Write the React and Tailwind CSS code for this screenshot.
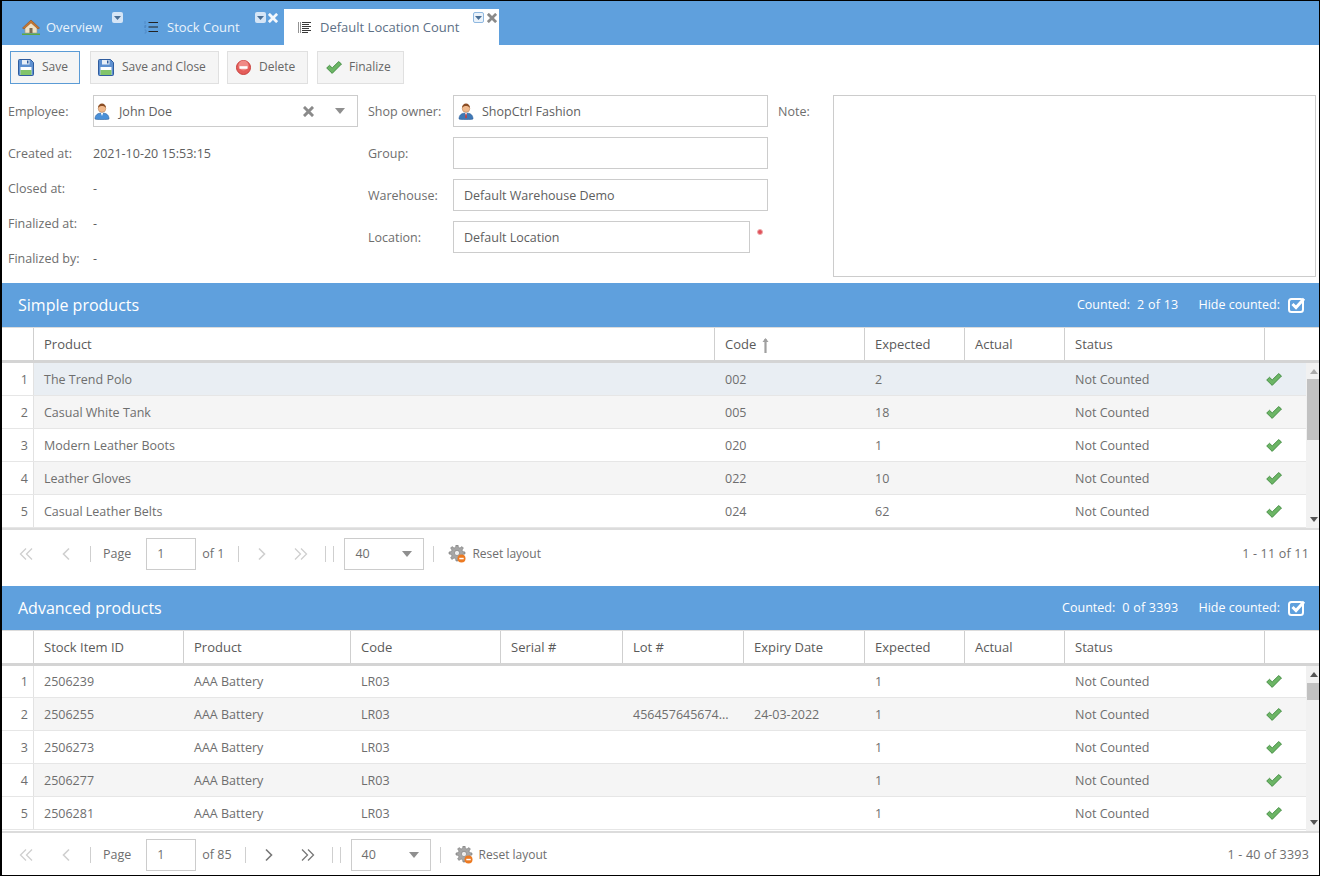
import React from "react";

const Home = () => (
  <svg width="20" height="18" viewBox="0 0 20 18" className="shrink-0">
    <path d="M4 9v6h12V9L10 4z" fill="#efe3c8" stroke="#a89a78" strokeWidth=".6" />
    <path d="M1.500 10 10 2l8.500 8-1.500 1L10 4.800 3 11z" fill="#c9772f" stroke="#8f5220" strokeWidth=".6" />
    <rect x="8.500" y="10" width="3" height="5" fill="#7d6a50" />
    <path d="M1 15.500h18V17H1z" fill="#5fa83f" />
  </svg>
);
const StockList = () => (
  <svg width="14" height="14" viewBox="0 0 14 14" className="shrink-0">
    <path d="M4.500 2.500H14M4.500 7H14M4.500 11.500H14" stroke="#222" strokeWidth="1" />
    <path d="M1 1v3M.5 5.500h1.500v1H.5v1H2M.5 10H2v3H.5" stroke="#4d86c4" strokeWidth=".8" fill="none" />
  </svg>
);
const DetailList = () => (
  <svg width="13" height="13" viewBox="0 0 13 13" className="shrink-0">
    <path d="M.5 1v11M2.500 1v11" stroke="#777" strokeWidth=".8" />
    <path d="M4 1.500h9M4 3.500h7M4 5.500h9M4 7.500h7M4 9.500h9M4 11.500h6" stroke="#222" strokeWidth=".9" />
  </svg>
);
const Floppy = () => (
  <svg width="16" height="17" viewBox="0 0 16 17" className="shrink-0">
    <path d="M.5 1.500a1 1 0 0 1 1-1h11l3 3v12a1 1 0 0 1-1 1h-13a1 1 0 0 1-1-1z" fill="#5d8fd0" stroke="#2f5c9e" />
    <rect x="4" y="1" width="7.500" height="4.500" fill="#e8eef6" />
    <rect x="9" y="1.500" width="1.500" height="3" fill="#2f5c9e" />
    <rect x="2.500" y="8" width="11" height="8" fill="#fff" />
    <rect x="2.500" y="11" width="11" height="5" fill="#82c46a" />
  </svg>
);
const Minus = () => (
  <svg width="15" height="15" viewBox="0 0 15 15" className="shrink-0">
    <circle cx="7.500" cy="7.500" r="7" fill="#e45d5a" stroke="#c8403d" />
    <circle cx="7.500" cy="5.500" r="5" fill="#f08a86" />
    <rect x="3.500" y="6.200" width="8" height="2.600" fill="#fff" />
  </svg>
);
const Check = () => (
  <svg width="16" height="13" viewBox="0 0 16 13" className="shrink-0">
    <path d="M.7 7 3.500 4.300l2.700 2.600L12.700.6 15.500 3 6.200 12.400z" fill="#6cb565" stroke="#3f8a3f" strokeWidth=".9" strokeLinejoin="round" />
  </svg>
);
const User = ({ suit = "#4a90d8", tie }) => (
  <svg width="16" height="17" viewBox="0 0 16 17" className="shrink-0">
    <path d="M1 16c0-4 2.500-6 7-6s7 2 7 6c0 .7-14 .7-14 0z" fill={suit} stroke="#2d5f9c" strokeWidth=".6" />
    <path d="M6.800 10h2.400L8 13z" fill="#fff" />
    {tie && <path d="M7.500 10.500h1l.5 4-1 1-1-1z" fill="#c8403d" />}
    <circle cx="8" cy="5.500" r="3.800" fill="#f0b98c" stroke="#b57a4c" strokeWidth=".5" />
    <path d="M4 5c0-3 2-4.500 4-4.500s4 1.500 4 4.500c-1-1.500-2.500-2-4-2s-3 .5-4 2z" fill="#8a4d24" />
  </svg>
);
const X = ({ size = 11, color = "#8a8a8a" }) => (
  <svg width={size} height={size} viewBox="0 0 11 11" className="block shrink-0">
    <path d="M2 2l7 7M9 2l-7 7" stroke={color} strokeWidth="3" strokeLinecap="square" />
  </svg>
);
const Caret = () => (
  <svg width="10" height="6" viewBox="0 0 10 6" className="block shrink-0">
    <path d="M0 0h10L5 6z" fill="#8f8f8f" />
  </svg>
);
const TabMenu = ({ active }) => (
  <span
    className={
      active
        ? "flex h-[11px] w-[11px] items-center justify-center rounded-[2px] border border-[#8fb8e0] bg-[#eaf2fa]"
        : "flex h-[11px] w-[11px] items-center justify-center rounded-[2px] bg-[#d5e5f6]"
    }
  >
    <svg width="7" height="4" viewBox="0 0 7 4"><path d="M0 0h7L3.500 4z" fill="#4a6f96" /></svg>
  </span>
);
const Gear = () => (
  <svg width="18" height="18" viewBox="0 0 18 18" className="block shrink-0">
    <path d="M8 0h2l.4 2.400 1.600.6L14 1.600 15.400 3 14 5l.6 1.600 2.400.4v2l-2.400.4L14 11l1.400 2-1.400 1.400L12 13l-1.600.6L10 16H8l-.4-2.400L6 13l-2 1.400L2.600 13 4 11l-.6-1.600L1 9V7l2.400-.4L4 5 2.600 3 4 1.600 6 3l1.600-.6z" fill="#a6a6a6" stroke="#777" strokeWidth=".6" />
    <circle cx="9" cy="8" r="2.600" fill="#eee" stroke="#777" strokeWidth=".6" />
    <circle cx="13.500" cy="13.500" r="4" fill="#ec7a22" />
    <rect x="11.300" y="12.800" width="4.400" height="1.500" fill="#fff" />
  </svg>
);
const Chev = ({ dir, double, color }) => {
  const w = double ? 1.3 : 1.6;
  return (
    <svg width="16" height="14" viewBox="0 0 16 14" className="block shrink-0">
      {dir === "left" ? (
        <>
          <path d={double ? "M8 1.500 2.500 7 8 12.500" : "M11 1.500 5.500 7l5.500 5.500"} stroke={color} strokeWidth={w} fill="none" />
          {double && <path d="M14 1.500 8.500 7l5.500 5.500" stroke={color} strokeWidth={w} fill="none" />}
        </>
      ) : (
        <>
          <path d={double ? "M2 1.500 7.500 7 2 12.500" : "M5 1.500 10.500 7 5 12.500"} stroke={color} strokeWidth={w} fill="none" />
          {double && <path d="M8 1.500 13.500 7 8 12.500" stroke={color} strokeWidth={w} fill="none" />}
        </>
      )}
    </svg>
  );
};
const Sep = ({ className = "" }) => <span className={"block h-[16px] w-px shrink-0 bg-[#cfcfcf] " + className} />;

const Btn = ({ w, active, icon, className = "", children }) => (
  <button
    className={
      "flex h-[33px] items-center border pl-[7px] text-[12px] text-[#666] " +
      (active ? "border-[#5b9bd5] bg-[#f5f5f5] " : "border-[#e0e0e0] bg-[#f5f5f5] ") +
      className
    }
    style={{ width: w }}
  >
    <span className="flex w-[24px] justify-start">{icon}</span>
    <span className="mb-[2px]">{children}</span>
  </button>
);

const Field = ({ icon, children, className = "w-[315px]" }) => (
  <div className={"flex h-[32px] items-center border border-[#ccc] bg-white pl-[10px] text-[#5e5e5e] " + className}>
    {icon && <span className="mr-[8px] ml-[-6px] flex">{icon}</span>}
    <span className="pt-[3px]">{children}</span>
  </div>
);

const Label = ({ children, className = "" }) => <span className={"text-[#6e6e6e] " + className}>{children}</span>;

const SectionHead = ({ title, counted }) => (
  <div className="flex h-[44px] shrink-0 items-center bg-[#5fa0dd] pr-[13px] pl-[16px] text-white">
    <span className="text-[16px]">{title}</span>
    <span className="ml-auto text-[12.5px]">Counted:<span className="ml-[7px] tracking-[0.25px]">{counted}</span></span>
    <span className="ml-[20px] text-[12.5px]">Hide counted:</span>
    <svg width="18" height="16" viewBox="0 0 18 16" className="ml-[8px]">
      <rect x="1" y="2" width="14" height="13" rx="2.500" fill="none" stroke="#fff" strokeWidth="2" />
      <path d="M4.500 7l3.500 3.500L16 1.800" stroke="#fff" strokeWidth="3" fill="none" />
    </svg>
  </div>
);

const Scrollbar = ({ thumbTop, thumbH, arrow }) => (
  <div className="relative w-[13px] shrink-0 bg-[#f1f1f1]">
    <svg width="8" height="5" viewBox="0 0 8 5" className="absolute top-[6px] left-[4px]"><path d="M0 5h8L4 0z" fill={arrow} /></svg>
    <div className="absolute left-[1px] w-[12px] bg-[#c1c1c1]" style={{ top: thumbTop, height: thumbH }} />
    <svg width="8" height="5" viewBox="0 0 8 5" className="absolute bottom-[6px] left-[4px]"><path d="M0 0h8L4 5z" fill="#555" /></svg>
  </div>
);

const Grid = ({ cols, head, rows, thumbTop, thumbH, arrow, clip }) => (
  <>
    <div className="flex h-[33px] shrink-0 border-t border-[#dcdcdc] text-[13px] text-[#5a5a5a]">
      <div className="w-[32px] shrink-0 border-r border-[#cfcfcf]" />
      {head.map((h, i) => (
        <div key={i} className="flex shrink-0 items-center border-r border-[#cfcfcf] pt-[2px] pl-[10px]" style={{ width: cols[i] }}>
          {h}
        </div>
      ))}
    </div>
    <div className="h-[3px] shrink-0 bg-[#d4d4d4]" />
    <div className="flex h-[167px] shrink-0 border-b-2 border-[#dcdcdc]">
      <div className={"min-w-0 flex-1 overflow-hidden " + (clip ? "[&>div:first-child]:mt-[-1px]" : "")}>
        {rows.map((r, ri) => (
          <div
            key={ri}
            className={
              "flex h-[33px] items-center border-b border-[#e6e6e6] text-[#6e6e6e] " +
              (r.sel ? "bg-[#e9eef3]" : ri % 2 ? "bg-[#f5f5f5]" : "bg-white")
            }
          >
            <div className="flex h-full w-[32px] shrink-0 items-center justify-end border-r border-[#e2e2e2] bg-white pt-[2px] pr-[5px]">{ri + 1}</div>
            {r.cells.map((c, i) => (
              <div key={i} className="flex shrink-0 items-center overflow-hidden pt-[2px] pl-[10px] whitespace-nowrap" style={{ width: cols[i] }}>
                {c}
              </div>
            ))}
            <div className="flex flex-1 pl-[1px]"><Check /></div>
          </div>
        ))}
      </div>
      <Scrollbar thumbTop={thumbTop} thumbH={thumbH} arrow={arrow} />
    </div>
  </>
);

const Pager = ({ of, active, total, sepGap, className }) => {
  const c = active ? "#777" : "#cfcfcf";
  return (
    <div className={"flex shrink-0 items-center pr-[10px] pl-[16px] text-[#6e6e6e] " + className}>
      <Chev dir="left" double color="#cfcfcf" />
      <span className="ml-[24px]"><Chev dir="left" color="#cfcfcf" /></span>
      <Sep className="ml-[16px]" />
      <span className="ml-[12px]">Page</span>
      <div className="ml-[15px] flex h-[32px] w-[50px] items-center border border-[#ccc] pl-[10px]">1</div>
      <span className="ml-[6px]">{of}</span>
      <Sep className={sepGap} />
      <span className="ml-[15px]"><Chev dir="right" color={c} /></span>
      <span className="ml-[23px]"><Chev dir="right" double color={c} /></span>
      <Sep className="ml-[16px]" />
      <Sep className="ml-[7px]" />
      <div className="ml-[10px] flex h-[32px] w-[80px] items-center border border-[#ccc] pr-[11px] pl-[10px]">
        40<span className="ml-auto"><Caret /></span>
      </div>
      <Sep className="ml-[9px]" />
      <span className="ml-[14px]"><Gear /></span>
      <span className="ml-[6px] text-[12px]">Reset layout</span>
      <span className="ml-auto tracking-[0.2px]">{total}</span>
    </div>
  );
};

const st = "Not Counted";
const simple = [
  ["The Trend Polo", "002", "2"],
  ["Casual White Tank", "005", "18"],
  ["Modern Leather Boots", "020", "1"],
  ["Leather Gloves", "022", "10"],
  ["Casual Leather Belts", "024", "62"],
].map((r, i) => ({ sel: i === 0, cells: [...r, "", st] }));
const adv = [
  ["2506239", "", ""],
  ["2506255", "456457645674...", "24-03-2022"],
  ["2506273", "", ""],
  ["2506277", "", ""],
  ["2506281", "", ""],
].map((r) => ({
  cells: [r[0], "AAA Battery", "LR03", "", r[1], r[2], "1", "", st],
}));

export default function App() {
  return (
    <div className="flex h-[876px] w-[1320px] flex-col overflow-hidden border-t border-r border-b border-l-2 border-black bg-white font-['Open_Sans',sans-serif] text-[12.5px]">
      <div className="flex h-[44px] shrink-0 items-end bg-[#5fa0dd] text-[13px]">
        <div className="relative flex h-[36px] w-[132px] items-center pl-[19px] text-[#eaf3fb]">
          <Home />
          <span className="ml-[5px] pt-[2px]">Overview</span>
          <span className="absolute top-[3px] left-[110px]"><TabMenu /></span>
        </div>
        <div className="relative flex h-[36px] w-[150px] items-center pl-[10px] text-[#eaf3fb]">
          <StockList />
          <span className="ml-[9px] pt-[2px]">Stock Count</span>
          <span className="absolute top-[3px] left-[121px]"><TabMenu /></span>
          <span className="absolute top-[4px] left-[134px]"><X size={10} color="#f4f8fc" /></span>
        </div>
        <div className="relative flex h-[36px] w-[215px] items-center bg-white pl-[14px] text-[#5c6f85]">
          <DetailList />
          <span className="ml-[9px] pt-[2px]">Default Location Count</span>
          <span className="absolute top-[3px] left-[189px]"><TabMenu active /></span>
          <span className="absolute top-[4px] left-[203px]"><X size={10} /></span>
        </div>
      </div>

      <div className="flex h-[45px] shrink-0 items-start pt-[6px] pl-[8px]">
        <Btn w={70} active icon={<Floppy />}>Save</Btn>
        <Btn w={129} className="ml-[10px]" icon={<Floppy />}>Save and Close</Btn>
        <Btn w={81} className="ml-[8px]" icon={<span className="ml-[1px]"><Minus /></span>}>Delete</Btn>
        <Btn w={87} className="ml-[9px]" icon={<span className="ml-[1px]"><Check /></span>}>Finalize</Btn>
      </div>

      <div className="flex h-[193px] shrink-0 items-start pt-[5px] pl-[6px]">
        <div className="w-[360px] shrink-0">
          <div className="flex h-[32px] items-center">
            <Label className="w-[85px] pt-[3px]">Employee:</Label>
            <div className="flex h-[32px] w-[265px] items-center border border-[#ccc] pr-[12px] text-[#5e5e5e]">
              <User />
              <span className="ml-[9px] pt-[3px]">John Doe</span>
              <span className="ml-auto"><X /></span>
              <span className="ml-[21px]"><Caret /></span>
            </div>
          </div>
          <div className="mt-[9px]">
            {[["Created at:", "2021-10-20 15:53:15"], ["Closed at:", "-"], ["Finalized at:", "-"], ["Finalized by:", "-"]].map(([a, b]) => (
              <div key={a} className="flex h-[35px] items-center pt-[2px]">
                <Label className="w-[85px]">{a}</Label>
                <span className="text-[#5e5e5e]">{b}</span>
              </div>
            ))}
          </div>
        </div>
        <div className="flex w-[410px] shrink-0 flex-col gap-[10px]">
          {[
            ["Shop owner:", "ShopCtrl Fashion", <User suit="#3f78b5" tie />],
            ["Group:", "", null],
            ["Warehouse:", "Default Warehouse Demo", null],
          ].map(([l, v, ic]) => (
            <div key={l} className="flex h-[32px] items-center">
              <Label className="w-[85px] pt-[2px]">{l}</Label>
              <Field icon={ic}>{v}</Field>
            </div>
          ))}
          <div className="flex h-[32px] items-center">
            <Label className="w-[85px] pt-[2px]">Location:</Label>
            <Field className="w-[297px]">Default Location</Field>
            <span className="mb-[10px] ml-[7px] h-[6px] w-[6px] rounded-full border border-[#eaa] bg-[#e0505a]" />
          </div>
        </div>
        <div className="flex shrink-0">
          <Label className="mt-[8px] w-[55px]">Note:</Label>
          <div className="h-[182px] w-[483px] border border-[#ccc]" />
        </div>
      </div>

      <SectionHead title="Simple products" counted="2 of 13" />
      <Grid
        cols={[681, 150, 100, 100, 200]}
        head={["Product", <>Code<svg width="9" height="15" viewBox="0 0 9 15" className="ml-[5px]"><path d="M4.500 1v14" stroke="#a0a0a0" strokeWidth="2.200" fill="none" /><path d="M4.500 0 1.500 4h6z" fill="#a0a0a0" /></svg></>, "Expected", "Actual", "Status"]}
        rows={simple}
        thumbTop={16}
        thumbH={61}
        arrow="#aaa"
      />
      <Pager of="of 1" total="1 - 11 of 11" sepGap="ml-[14px]" className="h-[56px] pb-[8px]" />
      <SectionHead title="Advanced products" counted="0 of 3393" />
      <Grid
        cols={[150, 167, 150, 122, 121, 121, 100, 100, 200]}
        head={["Stock Item ID", "Product", "Code", "Serial #", "Lot #", "Expiry Date", "Expected", "Actual", "Status"]}
        rows={adv}
        thumbTop={17}
        thumbH={17}
        arrow="#555"
        clip
      />
      <Pager of="of 85" total="1 - 40 of 3393" active sepGap="ml-[13px]" className="h-[42px] pt-[2px]" />
    </div>
  );
}
